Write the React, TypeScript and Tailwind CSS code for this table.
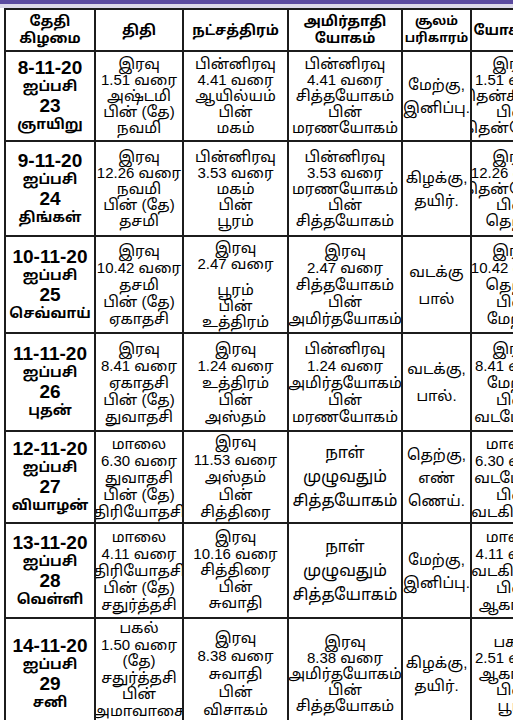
import React from "react";

type Cell = { lines: string[]; cls?: string };

const c = (lines: string[], cls?: string): Cell => ({ lines, cls });

const rows: { h: string; date: string[]; cells: Cell[] }[] = [
  {
    h: "h-[90px]",
    date: ["8-11-20", "ஐப்பசி", "23", "ஞாயிறு"],
    cells: [
      c(["இரவு", "1.51 வரை", "அஷ்டமி", "பின் (தே)", "நவமி"]),
      c(["பின்னிரவு", "4.41 வரை", "ஆயில்யம்", "பின்", "மகம்"]),
      c(["பின்னிரவு", "4.41 வரை", "சித்தயோகம்", "பின்", "மரணயோகம்"]),
      c(["மேற்கு,", "இனிப்பு."], "leading-[23px]"),
      c(["இரவு", "1.51 வரை", "தென்கிழக்கு", "பின்", "தென்மேற்கு"]),
    ],
  },
  {
    h: "h-[95px]",
    date: ["9-11-20", "ஐப்பசி", "24", "திங்கள்"],
    cells: [
      c(["இரவு", "12.26 வரை", "நவமி", "பின் (தே)", "தசமி"]),
      c(["பின்னிரவு", "3.53 வரை", "மகம்", "பின்", "பூரம்"]),
      c(["பின்னிரவு", "3.53 வரை", "மரணயோகம்", "பின்", "சித்தயோகம்"]),
      c(["கிழக்கு,", "தயிர்."], "leading-[23px]"),
      c(["இரவு", "12.26 வரை", "தென்மேற்கு", "பின்", "தெற்கு"]),
    ],
  },
  {
    h: "h-[97px]",
    date: ["10-11-20", "ஐப்பசி", "25", "செவ்வாய்"],
    cells: [
      c(["இரவு", "10.42 வரை", "தசமி", "பின் (தே)", "ஏகாதசி"], "leading-[17px]"),
      c(["இரவு", "2.47 வரை", "", "பூரம்", "பின்", "உத்திரம்"]),
      c(["இரவு", "2.47 வரை", "சித்தயோகம்", "பின்", "அமிர்தயோகம்"], "leading-[17px]"),
      c(["வடக்கு", "பால்"], "leading-[27px]"),
      c(["இரவு", "10.42 வரை", "தெற்கு", "பின்", "மேற்கு"], "leading-[17px]"),
    ],
  },
  {
    h: "h-[98px]",
    date: ["11-11-20", "ஐப்பசி", "26", "புதன்"],
    cells: [
      c(["இரவு", "8.41 வரை", "ஏகாதசி", "பின் (தே)", "துவாதசி"], "leading-[17px]"),
      c(["இரவு", "1.24 வரை", "உத்திரம்", "பின்", "அஸ்தம்"], "leading-[17px]"),
      c(["பின்னிரவு", "1.24 வரை", "அமிர்தயோகம்", "பின்", "மரணயோகம்"], "leading-[17px]"),
      c(["வடக்கு,", "பால்."], "leading-[27px]"),
      c(["இரவு", "8.41 வரை", "மேற்கு", "பின்", "வடமேற்கு"], "leading-[17px]"),
    ],
  },
  {
    h: "h-[92px]",
    date: ["12-11-20", "ஐப்பசி", "27", "வியாழன்"],
    cells: [
      c(["மாலை", "6.30 வரை", "துவாதசி", "பின் (தே)", "திரியோதசி"], "leading-[17px]"),
      c(["இரவு", "11.53 வரை", "அஸ்தம்", "பின்", "சித்திரை"], "leading-[17.5px]"),
      c(["நாள்", "முழுவதும்", "சித்தயோகம்"], "leading-[24px] text-[16px]"),
      c(["தெற்கு,", "எண்", "ணெய்."], "leading-[23px]"),
      c(["மாலை", "6.30 வரை", "வடமேற்கு", "பின்", "வடகிழக்கு"], "leading-[17px]"),
    ],
  },
  {
    h: "h-[95px]",
    date: ["13-11-20", "ஐப்பசி", "28", "வெள்ளி"],
    cells: [
      c(["மாலை", "4.11 வரை", "திரியோதசி", "பின் (தே)", "சதுர்த்தசி"], "leading-[17px]"),
      c(["இரவு", "10.16 வரை", "சித்திரை", "பின்", "சுவாதி"], "leading-[16.5px]"),
      c(["நாள்", "முழுவதும்", "சித்தயோகம்"], "leading-[24px] text-[16px]"),
      c(["மேற்கு,", "இனிப்பு."], "leading-[23px]"),
      c(["மாலை", "4.11 வரை", "வடகிழக்கு", "பின்", "ஆகாயம்"], "leading-[17px]"),
    ],
  },
  {
    h: "h-[112px]",
    date: ["14-11-20", "ஐப்பசி", "29", "சனி"],
    cells: [
      c(["பகல்", "1.50 வரை", "(தே)", "சதுர்த்தசி", "பின்", "அமாவாசை"], "leading-[16.5px] !justify-start pt-[1px]"),
      c(["இரவு", "8.38 வரை", "சுவாதி", "பின்", "விசாகம்"], "leading-[18px]"),
      c(["இரவு", "8.38 வரை", "அமிர்தயோகம்", "பின்", "சித்தயோகம்"]),
      c(["கிழக்கு,", "தயிர்."], "leading-[23px]"),
      c(["பகல்", "2.51 வரை", "ஆகாயம்", "பின்", "பூமி"]),
    ],
  },
];

const headers: { lines: string[]; cls?: string }[] = [
  { lines: ["தேதி", "கிழமை"] },
  { lines: ["திதி"] },
  { lines: ["நட்சத்திரம்"] },
  { lines: ["அமிர்தாதி", "யோகம்"] },
  { lines: ["சூலம்", "பரிகாரம்"], cls: "text-[12.5px]" },
  { lines: ["யோகினி"] },
];

const cellBase =
  "border-r-2 border-b-2 border-[#1c1c1c] flex flex-col items-center justify-center text-center overflow-hidden";

export default function App() {
  return (
    <div
      className="w-[513px] h-[720px] overflow-hidden bg-white text-black"
      style={{ fontFamily: '"Liberation Sans", "Noto Sans Tamil", "Lohit Tamil", "Noto Sans", sans-serif' }}
    >
      <div className="h-[4px] bg-[#5b4aa0]" />
      <div className="h-[4px] bg-[#dcd8ea]" />
      <div className="pl-[4px]">
        <div className="grid grid-cols-[90px_88px_105px_114px_69px_80px] w-[546px] border-l-2 border-t-2 border-[#1c1c1c]">
          {headers.map((h, i) => (
            <div key={i} className={`${cellBase} h-[42px] font-bold ${h.cls ?? "text-[14px]"} leading-[17px]`}>
              {h.lines.map((t, j) => (
                <span key={j} className="whitespace-nowrap">{t}</span>
              ))}
            </div>
          ))}
          {rows.map((r, ri) => (
            <React.Fragment key={ri}>
              <div className={`${cellBase} ${r.h} font-bold leading-[19px]`}>
                <span className="text-[19px]">{r.date[0]}</span>
                <span className="text-[14px]">{r.date[1]}</span>
                <span className="text-[19px]">{r.date[2]}</span>
                <span className="text-[14px]">{r.date[3]}</span>
              </div>
              {r.cells.map((cell, ci) => (
                <div
                  key={ci}
                  className={`${cellBase} ${r.h} text-[15px] ${cell.cls ?? "leading-[16px]"} ${ci === 4 ? "pl-[4px]" : ""}`}
                >
                  {cell.lines.map((t, j) =>
                    t === "" ? (
                      <span key={j} className="h-[10px]" />
                    ) : (
                      <span key={j} className="whitespace-nowrap">
                        {t}
                      </span>
                    )
                  )}
                </div>
              ))}
            </React.Fragment>
          ))}
        </div>
      </div>
    </div>
  );
}
